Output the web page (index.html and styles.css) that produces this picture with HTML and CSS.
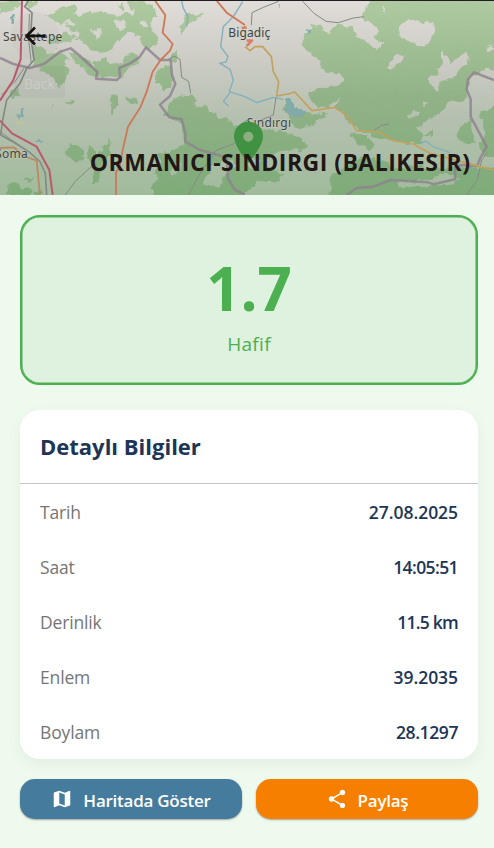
FILE: index.html
```html
<!DOCTYPE html>
<html lang="tr">
<head>
<meta charset="utf-8">
<title>Deprem Detayı</title>
<link rel="stylesheet" href="styles.css">
</head>
<body>
<header class="hero">
  <svg class="map" viewBox="0 0 1482 585" preserveAspectRatio="none">
    <defs>
      <linearGradient id="land" gradientUnits="userSpaceOnUse" x1="0" y1="0" x2="0" y2="585">
        <stop offset="0" stop-color="#e1ddd9"/><stop offset=".3" stop-color="#cdccc5"/><stop offset=".6" stop-color="#b5c0b0"/><stop offset="1" stop-color="#a0bb9b"/>
      </linearGradient>
      <linearGradient id="wood" gradientUnits="userSpaceOnUse" x1="0" y1="0" x2="0" y2="585">
        <stop offset="0" stop-color="#afcaa1"/><stop offset=".5" stop-color="#91b287"/><stop offset="1" stop-color="#7fab79"/>
      </linearGradient>
      <filter id="rough" filterUnits="userSpaceOnUse" x="-20" y="-20" width="1522" height="625">
        <feTurbulence type="fractalNoise" baseFrequency=".04" numOctaves="3" seed="4"/>
        <feDisplacementMap in="SourceGraphic" scale="26" xChannelSelector="R" yChannelSelector="G"/>
      </filter>
    </defs>
    <rect width="1482" height="585" fill="url(#land)"/>
    <g filter="url(#rough)">
    <g fill="url(#wood)" stroke="url(#wood)" stroke-width="3" stroke-linejoin="round">
      <path d="M0 10L40 2 62 10 50 22 20 35 0 40ZM80 5L120 3 110 16 90 20Z"/>
      <path d="M142 45L165 38 190 22 222 12 235 28 218 42 240 50 266 36 292 45 320 35 350 52 372 38 398 50 410 20 440 8 462 22 472 50 450 65 452 92 474 110 470 130 448 146 425 128 408 98 385 94 368 118 345 122 330 152 302 158 270 150 254 128 225 120 238 98 215 90 195 72 160 65Z"/>
      <path d="M382 10L430 2 460 12 430 22 395 28ZM355 22L373 15 367 30Z"/>
      <path d="M140 122L176 110 198 96 222 105 215 122 178 128 150 138ZM98 140L120 135 150 160 185 150 205 175 190 195 208 215 196 240 178 262 158 232 132 210 104 198Z"/>
      <path d="M212 155L240 165 265 188 290 210 300 230 275 226 250 200 225 185ZM284 188L312 178 330 190 365 198 376 168 402 160 415 185 385 205 360 235 310 233 290 215Z"/>
      <path d="M470 212L500 195 518 218 512 258 490 268 470 245ZM512 160L530 152 526 185 514 180ZM548 62L562 40 606 42 590 58 570 66 556 90 540 98Z"/>
      <path d="M334 292L356 290 350 318 332 342ZM380 290L410 300 408 316 385 308ZM198 312L222 306 218 316Z"/>
      <path d="M495 342L520 300 545 288 580 292 586 320 620 325 650 350 682 355 700 378 740 365 790 392 850 396 896 410 920 430 904 452 870 448 820 458 790 484 815 510 850 524 820 548 780 540 750 565 720 590 460 590 456 556 480 535 462 508 490 486 475 465 520 452 556 440 546 375Z"/>
      <path d="M205 436L225 432 250 450 252 476 222 486 200 455ZM265 440L290 450 288 470 330 420 328 462 298 500 296 545 278 552 284 510 266 485ZM22 555L48 548 60 574 90 562 92 585 20 585ZM75 536L98 532 94 544ZM30 278L52 268 56 284 36 292ZM100 575L125 572 128 585 105 585Z"/>
      <path d="M1086 50L1118 -15 1500 -15 1500 204 1450 210 1435 218 1412 232 1398 290 1380 308 1350 300 1332 335 1310 350 1296 405 1265 412 1258 432 1205 425 1160 416 1105 398 1062 382 1038 344 1010 320 1030 250 1022 222 980 210 948 168 900 138 925 95 938 74 964 82 984 100 1012 72 1050 80 1072 110 1135 152 1152 130 1125 110 1134 92 1112 72Z"/>
      <path d="M930 272L976 262 1006 262 1036 240 1028 275 998 310 955 326 930 295ZM855 305L880 325 920 338 980 345 955 365 900 385 868 358 850 330Z"/>
      <path d="M1050 400L1100 408 1125 438 1108 448 1070 430ZM990 528L1040 500 1095 470 1150 482 1180 508 1240 498 1300 510 1370 500 1500 510 1500 600 990 600Z"/>
      <path d="M1440 345L1500 310 1500 470 1450 462 1440 430 1462 410ZM1375 390L1408 362 1425 430 1390 424 1368 410Z"/>
    </g>
    <g fill="url(#land)">
      <path d="M1200 80L1222 64 1310 74 1300 110 1272 138 1240 128 1198 108ZM1288 240L1320 206 1330 150 1350 185 1378 172 1405 155 1400 188 1362 228 1340 248 1320 244 1322 276 1300 262ZM1156 206L1190 166 1212 164 1202 188 1180 208ZM1402 278L1440 270 1500 256 1500 310 1440 330 1424 305ZM1222 342L1258 330 1248 350 1222 356ZM1250 385L1300 350 1328 345 1310 385 1270 408ZM1462 148L1474 132 1482 154ZM1330 520L1380 535 1340 562 1200 555 1180 540 1250 548ZM1148 20L1158 24 1152 36ZM1268 306L1284 300 1276 318Z"/>
      <path d="M185 68L210 62 232 72 214 78ZM276 92L300 84 306 98 286 112ZM344 62L380 60 372 82 350 86ZM420 60L435 55 442 78 428 84ZM640 490L690 475 710 495 680 520 650 560 610 550ZM520 490L545 480 540 520 515 525ZM740 470L780 480 762 510 735 495Z"/>
    </g>
    <g fill="#82aaa9">
      <path d="M854 300L876 300 884 322 922 338 905 350 880 348 862 356ZM48 340L58 346 72 322 70 346 56 362ZM110 420L130 420 122 430ZM34 42L46 38 38 66 30 62ZM922 86L934 80 930 100 922 104ZM152 328L162 310 158 322ZM828 16L834 16 832 26Z"/>
    </g>
    </g>
    <path d="M48 362L70 364 66 374 50 374Z" fill="#bfc39c"/>
    <g fill="none" stroke="#7fb0bc" stroke-width="4">
      <path d="M545 3L550 25 564 50 560 78M728 5L700 50 670 80 662 140 684 170 678 186 660 190 690 208 700 240 688 275 735 290 770 308 820 292 850 298"/><path d="M690 278L670 304 686 318M1258 430L1278 424 1300 440 1350 458"/>
    </g>
    <g fill="none" stroke="#858b84" stroke-width="3">
      <path d="M86 0L74 20 96 38 92 110 102 180 80 205 60 250 20 300 8 360 2 405 38 425 90 458 120 485 136 520 140 585" stroke-width="5"/>
      <path d="M72 205L45 245 5 285M88 42L86 120 94 190M0 395L35 420 80 450"/>
      <path d="M505 178L522 168 540 178 545 232 566 244 572 280M196 585L225 545 268 505 290 490M565 585L600 520 650 450 705 430M754 76L756 38 790 22 836 4M908 4L942 40 978 64 1015 68 1060 54 1092 50M828 292L820 345 778 362M1120 392L1145 376 1166 372M1462 458L1445 480 1432 540 1400 585"/>
    </g>
    <g fill="none" stroke="#8d818e" stroke-width="7.500" stroke-linejoin="round" opacity=".8">
      <path d="M0 174L40 192 90 204 135 190 180 155 212 145 240 168 292 216 288 236 350 240 360 232 358 204 390 190 418 172 438 142 480 180 512 180 516 225 526 252 510 288 480 314 508 352 545 358 556 400 556 425 600 450 680 472 684 535 705 570 735 584"/>
      <path d="M1040 585L1070 564 1120 560 1172 540 1285 547 1300 553 1365 538 1366 505 1380 495 1432 498 1440 475 1460 440 1412 350 1412 298 1400 268 1404 238 1422 217 1482 240"/>
    </g>
    <g fill="none" stroke-linejoin="round">
      <path d="M66 0L62 178 40 240 0 302M0 362L36 400 110 440 148 510 158 585" stroke="#bb596e" stroke-width="6"/>
      <path d="M464 0L496 46 488 98 518 132 510 152 482 180 458 215 440 275 422 320 384 380 368 450 358 505 348 515 348 585M650 2L680 38 735 75" stroke="#cd7858" stroke-width="5.500"/>
      <path d="M0 444L42 442 70 468 110 482 120 585" stroke="#bd8962" stroke-width="5.500"/>
      <path d="M735 140L750 152 765 140 788 140 814 170 820 215 836 245 830 288 864 282 884 276 936 332 1004 322 1042 348 1070 392 1138 396 1180 422 1240 432 1290 460 1350 476 1440 500 1482 510" stroke="#c3a15e" stroke-width="5"/>
      <path d="M725 84L740 82M740 122L756 122 740 138" stroke="#d98167" stroke-width="8"/>
    </g>
    <g class="place">
      <text x="9" y="122" textLength="178">Savaştepe</text>
      <text x="-14" y="475" textLength="97">Soma</text>
      <text x="685" y="112" textLength="126">Bigadiç</text>
      <text x="740" y="381" textLength="133">Sındırgı</text>
    </g>
    <path fill="#409141" fill-rule="evenodd" d="M745 365C721 365 702 384 702 409 702 441 745 488 745 488S789 441 789 409C789 384 769 365 745 365ZM745 395A15 15 0 1 1 745 425 15 15 0 1 1 745 395Z"/>
  </svg>
  <svg class="back" viewBox="0 0 28 28"><path d="M24.500 14H6M14 5.500L5.500 14l8.500 8.500"/></svg>
  <span class="back-tip">Back</span>
  <h1 class="title">ORMANICI-SINDIRGI (BALIKESIR)</h1>
</header>
<main class="content">
  <section class="magnitude">
    <div class="value">1.7</div>
    <div class="level">Hafif</div>
  </section>
  <section class="details">
    <h2 class="heading">Detaylı Bilgiler</h2>
    <dl class="rows">
      <div class="row"><dt>Tarih</dt><dd>27.08.2025</dd></div>
      <div class="row"><dt>Saat</dt><dd class="time">14:05:51</dd></div>
      <div class="row"><dt>Derinlik</dt><dd class="depth">11.5 km</dd></div>
      <div class="row"><dt>Enlem</dt><dd>39.2035</dd></div>
      <div class="row"><dt>Boylam</dt><dd class="longitude">28.1297</dd></div>
    </dl>
  </section>
  <div class="actions">
    <button class="btn show">
      <svg viewBox="0 0 24 24"><path d="M20.5 3l-.16.03L15 5.1 9 3 3.36 4.9c-.21.07-.36.25-.36.48V20.500c0 .28.22.5.5.5l.16-.03L9 18.900l6 2.100 5.640-1.900c.21-.07.36-.25.36-.48V3.500c0-.28-.22-.5-.5-.5zM15 19l-6-2.110V5l6 2.110V19z"/></svg>
      <span>Haritada Göster</span>
    </button>
    <button class="btn share">
      <svg viewBox="0 0 24 24"><path d="M18 16.080c-.76 0-1.440.3-1.960.77L8.910 12.700c.05-.23.09-.46.09-.7s-.04-.47-.09-.7l7.050-4.110c.54.5 1.250.81 2.040.81 1.660 0 3-1.340 3-3s-1.340-3-3-3-3 1.340-3 3c0 .24.04.47.09.7L8.040 9.810C7.500 9.310 6.790 9 6 9c-1.660 0-3 1.340-3 3s1.340 3 3 3c.79 0 1.500-.31 2.040-.81l7.120 4.160c-.05.21-.08.43-.08.65 0 1.610 1.310 2.920 2.920 2.920s2.920-1.310 2.920-2.920-1.310-2.920-2.920-2.920z"/></svg>
      <span>Paylaş</span>
    </button>
  </div>
</main>
</body>
</html>
```
FILE: styles.css
```css
* { box-sizing: border-box; }
body {
  margin: 0;
  height: 848px;
  overflow: hidden;
  background: #effaee;
  font-family: "Open Sans", "Noto Sans", sans-serif;
}
.hero {
  position: relative;
  height: 195px;
  border-top: 1px solid #231d22;
  display: flex;
  justify-content: flex-end;
  align-items: flex-end;
  padding: 0 24px 17px 0;
  overflow: hidden;
}
.map {
  position: absolute;
  top: -1px;
  left: 0;
  width: 494px;
  height: 195px;
  z-index: -1;
}
.place {
  font: 36px "Noto Sans", sans-serif;
  fill: #424642;
  stroke: #d5d7cf;
  stroke-width: 4px;
  stroke-opacity: .5;
  paint-order: stroke;
}
.hero::before {
  content: "";
  position: absolute;
  left: 11px;
  top: 11px;
  width: 48px;
  height: 48px;
  border-radius: 50%;
  background: rgba(110, 110, 110, .05);
}
.back {
  position: absolute;
  left: 21px;
  top: 21px;
  width: 28px;
  height: 28px;
  fill: none;
  stroke: #181112;
  stroke-width: 2.500px;
}
.back-tip {
  position: absolute;
  left: 14px;
  top: 65px;
  width: 51px;
  height: 32px;
  border-radius: 4px;
  background: rgba(90, 90, 90, .06);
  color: rgba(255, 255, 255, .24);
  font-size: 14px;
  line-height: 35px;
  text-align: center;
}
.title {
  margin: 0 -.4px 0 0;
  font-size: 23px;
  line-height: 32px;
  font-weight: 700;
  letter-spacing: .46px;
  white-space: nowrap;
  color: #211718;
}
.content {
  padding: 20px 16px 0 20px;
  width: 494px;
}
.magnitude {
  height: 170px;
  border: 2px solid #4caf50;
  box-shadow: inset 0 0 0 .5px #4caf50;
  border-radius: 20px;
  background: #dff2df;
  color: #4caf50;
  text-align: center;
  padding-top: 35px;
}
.value {
  font-size: 60px;
  line-height: 72px;
  font-weight: 700;
}
.level {
  font-size: 19px;
  line-height: 40px;
  letter-spacing: .3px;
}
.details {
  margin-top: 25px;
  height: 349px;
  background: #fff;
  border-radius: 20px;
  box-shadow: 0 5px 15px rgba(0, 0, 0, .05);
}
.heading {
  margin: 0;
  height: 74px;
  padding-left: 20px;
  border-bottom: 1px solid #c8c4c6;
  font-size: 22px;
  line-height: 72px;
  color: #1d3557;
}
.rows { margin: 0; }
.row {
  height: 55px;
  padding: 0 20px;
  display: flex;
  justify-content: space-between;
  align-items: center;
  font-size: 17.500px;
}
dt { color: #757575; letter-spacing: -.15px; }
dd { margin: 0; color: #1d3557; font-weight: 600; letter-spacing: -.05px; }
.time, .depth { letter-spacing: -.6px; }
.depth { letter-spacing: -.75px; }
.longitude { letter-spacing: -.4px; }
.actions {
  display: flex;
  gap: 14px;
  margin-top: 20px;
}
.btn {
  flex: 1;
  height: 40px;
  display: flex;
  justify-content: center;
  align-items: center;
  border: 0;
  border-radius: 15px;
  color: #fff;
  font-family: inherit;
  font-size: 17px;
  font-weight: 600;
  line-height: 40px;
  letter-spacing: -.25px;
  box-shadow: 0 1px 2px rgba(0, 0, 0, .35);
}
.btn svg { width: 22px; height: 22px; fill: #fff; margin-right: 10px; }
.btn span { padding-top: 3px; }
.show { background: #457b9d; }
.share { background: #f77f00; }
```
